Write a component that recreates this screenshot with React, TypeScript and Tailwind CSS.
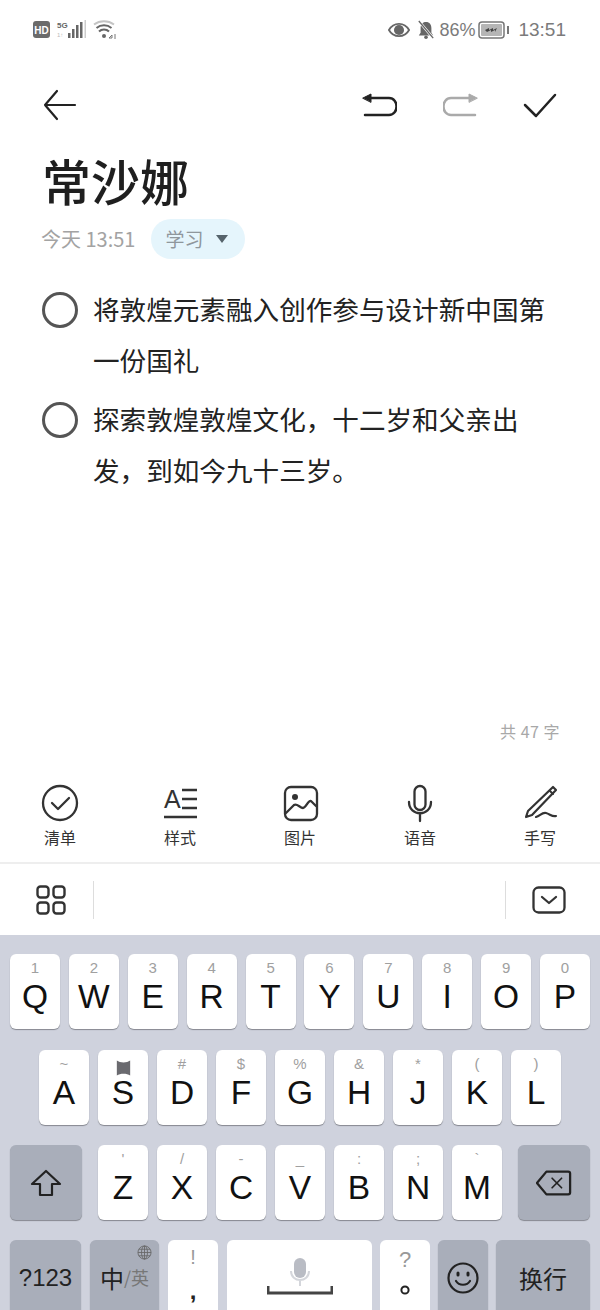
const cjk = "font-['Noto_Sans_CJK_SC','Liberation_Sans',sans-serif]";

const row1: [string, string][] = [["Q", "1"], ["W", "2"], ["E", "3"], ["R", "4"], ["T", "5"], ["Y", "6"], ["U", "7"], ["I", "8"], ["O", "9"], ["P", "0"]];
const row2: [string, string][] = [["A", "~"], ["S", ""], ["D", "#"], ["F", "$"], ["G", "%"], ["H", "&"], ["J", "*"], ["K", "("], ["L", ")"]];
const row3: [string, string][] = [["Z", "'"], ["X", "/"], ["C", "-"], ["V", "_"], ["B", ":"], ["N", ";"], ["M", "`"]];

function StatusBar() {
  return (
    <div className="h-[60px] pl-[33px] pr-[34px] flex items-center justify-between text-[#7b7b7b]">
      <svg width="84" height="24" viewBox="0 0 84 24" fill="none">
        <rect x="0" y="3" width="17" height="17" rx="3" fill="#6b6b6b" />
        <text x="8.5" y="15.5" textAnchor="middle" fontSize="10" fontWeight="700" fill="#fff" fontFamily="Liberation Sans">HD</text>
        <text x="24" y="10" fontSize="8" fontWeight="700" fill="#666" fontFamily="Liberation Sans">5G</text>
        <text x="24" y="19" fontSize="6" fill="#bbb" fontFamily="Liberation Sans">1↑</text>
        <rect x="35" y="15" width="2.5" height="5" fill="#666" />
        <rect x="39" y="11" width="2.5" height="9" fill="#666" />
        <rect x="43" y="7" width="2.5" height="13" fill="#666" />
        <rect x="47" y="4" width="2.5" height="16" fill="#666" />
        <rect x="51.5" y="2" width="1.5" height="18" fill="#ccc" />
        <path d="M61 6.5a17 17 0 0 1 20 0" stroke="#c4c4c4" strokeWidth="2" />
        <path d="M63.5 10a12 12 0 0 1 15 0" stroke="#666" strokeWidth="2" />
        <path d="M66 13.5a7 7 0 0 1 10 0" stroke="#666" strokeWidth="2" />
        <circle cx="71" cy="18" r="2" fill="#666" />
        <path d="M76 20l3-3v3zM82 16v5" stroke="#777" strokeWidth="1" />
      </svg>
      <div className="flex items-center">
        <svg width="22" height="18" viewBox="0 0 24 18" className="mr-[7px]">
          <path d="M1 9c5-9 17-9 22 0c-5 9-17 9-22 0z" fill="none" stroke="#666" strokeWidth="2" />
          <circle cx="12" cy="9" r="5.5" fill="#666" />
        </svg>
        <svg width="18" height="22" viewBox="0 0 20 22" className="mr-[4px]">
          <path d="M10 2c4 0 6 3 6 7v5l2 3H2l2-3V9c0-4 2-7 6-7z" fill="#666" />
          <circle cx="10" cy="19" r="2" fill="#666" />
          <path d="M2 1l16 19" stroke="#fff" strokeWidth="3" />
          <path d="M2 1l16 19" stroke="#666" strokeWidth="1.5" />
        </svg>
        <span className="text-[18px] font-['Liberation_Sans',sans-serif] mr-[3px]">86%</span>
        <svg width="32" height="18" viewBox="0 0 32 18" className="mr-[8px]">
          <rect x="1" y="1" width="25" height="16" rx="3" fill="#fff" stroke="#777" strokeWidth="1.5" />
          <rect x="3" y="3" width="21" height="12" rx="1" fill="#b5b5b5" />
          <path d="M7 9l4-2v2l4-2v2l4-2l-2 4v-2l-4 2v-2l-4 2z" fill="#444" />
          <rect x="29" y="5" width="2" height="8" fill="#777" />
        </svg>
        <span className="text-[19px] font-['Liberation_Sans',sans-serif]">13:51</span>
      </div>
    </div>
  );
}

function Header() {
  return (
    <div className="h-[90px] pl-[42px] pr-[42px] flex items-center justify-between text-[#222]">
      <svg width="36" height="34" viewBox="0 0 36 34" fill="none" stroke="currentColor" strokeWidth="2.2" strokeLinecap="round" strokeLinejoin="round">
        <path d="M33 17H3M15 3L3 17l12 14" />
      </svg>
      <div className="flex items-center gap-[46px]">
        <svg width="36" height="26" viewBox="0 0 36 26" fill="none" stroke="currentColor" strokeWidth="2.5" strokeLinecap="round">
          <path d="M5 6h23c10 0 10 17 0 17H4" />
          <path d="M2 6l8-4v8z" fill="currentColor" strokeWidth="1" />
        </svg>
        <svg width="36" height="26" viewBox="0 0 36 26" fill="none" stroke="#aaa" strokeWidth="2.5" strokeLinecap="round">
          <path d="M31 6H8C-2 6-2 23 8 23h24" />
          <path d="M34 6l-8-4v8z" fill="#aaa" strokeWidth="1" />
        </svg>
        <svg width="36" height="26" viewBox="0 0 36 26" fill="none" stroke="currentColor" strokeWidth="2.5" strokeLinecap="round" strokeLinejoin="round" className="-ml-[3px]">
          <path d="M3 13l11 11L33 3" />
        </svg>
      </div>
    </div>
  );
}

function TodoItem({ lines }: { lines: string[] }) {
  return (
    <div className="flex">
      <div className="w-[36px] h-[36px] mt-[9px] mr-[15px] rounded-full border-[3px] border-[#555] shrink-0" />
      <div className="text-[26.6px] leading-[51px] text-[#222]">
        {lines.map((l) => (
          <div key={l} className="whitespace-nowrap">{l}</div>
        ))}
      </div>
    </div>
  );
}

const stroke = { fill: "none", stroke: "#333", strokeWidth: 2.3, strokeLinecap: "round", strokeLinejoin: "round" } as const;

const tools = [
  {
    label: "清单",
    icon: (
      <>
        <circle cx="20" cy="20" r="17" {...stroke} />
        <path d="M12 20l6 6 11-11" {...stroke} />
      </>
    ),
  },
  {
    label: "样式",
    icon: (
      <>
        <text x="4" y="25" fontSize="25" fill="#333" fontFamily="Liberation Sans">A</text>
        <path d="M22 7h15M22 16h15M22 25h15M4 34h33" {...stroke} strokeLinecap="butt" />
      </>
    ),
  },
  {
    label: "图片",
    icon: (
      <>
        <rect x="5" y="4" width="32" height="33" rx="6" {...stroke} />
        <circle cx="15" cy="14" r="3" fill="#333" />
        <path d="M6 30l8-8c3-2 6 3 9 3 3 0 5-8 8-7l5 5" {...stroke} />
      </>
    ),
  },
  {
    label: "语音",
    icon: (
      <>
        <rect x="14.5" y="3" width="11" height="24" rx="5.5" {...stroke} />
        <path d="M9 19c0 15 22 15 22 0M20 31v7" {...stroke} />
      </>
    ),
  },
  {
    label: "手写",
    icon: (
      <>
        <path d="M33 4l3 3-24 25-6 2 2-6z" {...stroke} strokeWidth="2.2" />
        <path d="M30 8l3 3" {...stroke} strokeWidth="2" />
        <path d="M16 34c4-1 6-5 10-4s6 4 10 3" {...stroke} strokeWidth="2.2" />
      </>
    ),
  },
];

function Toolbar() {
  return (
    <div className="grid grid-cols-5 h-[91px] border-b-2 border-[#eee]">
      {tools.map((t) => (
        <div key={t.label} className="flex flex-col items-center">
          <svg width="40" height="42" viewBox="0 0 40 40" className="mt-[9px]">{t.icon}</svg>
          <span className="text-[16px] leading-[24px] mt-[1px] text-[#333]">{t.label}</span>
        </div>
      ))}
    </div>
  );
}

function KeyboardBar() {
  return (
    <div className="h-[71px] flex items-center">
      <div className="w-[94px] h-[38px] border-r border-[#ddd] flex items-center pl-[36px]">
        <svg width="30" height="30" viewBox="0 0 30 30" {...stroke} strokeWidth={2.4}>
          <rect x="1.5" y="1.5" width="11" height="11" rx="3" />
          <rect x="17.5" y="1.5" width="11" height="11" rx="3" />
          <rect x="1.5" y="17.5" width="11" height="11" rx="3" />
          <rect x="17.5" y="17.5" width="11" height="11" rx="3" />
        </svg>
      </div>
      <div className="flex-1" />
      <div className="w-[95px] h-[38px] border-l border-[#ddd] flex items-center pl-[26px]">
        <svg width="34" height="28" viewBox="0 0 34 28" {...stroke}>
          <rect x="1.5" y="1.5" width="31" height="25" rx="5" />
          <path d="M10 11l7 6 7-6" />
        </svg>
      </div>
    </div>
  );
}

function LetterKey({ letter, hint }: { letter: string; hint: string }) {
  return (
    <div className="relative w-[50px] h-[75px] rounded-[6px] bg-white shadow-[0_1px_1px_#85878f] flex flex-col items-center">
      <div className="h-[23px] pt-[4px] text-[15px] leading-[20px] text-[#a0a0a0] font-['Liberation_Sans',sans-serif]">
        {hint}
        {letter === "S" && (
          <svg width="19" height="20" viewBox="0 0 20 24" className="absolute top-[8px] left-[16px]">
            <path d="M2 3c4 3 12 3 16 0v18c-4-3-12-3-16 0z" fill="#6a6a6f" />
          </svg>
        )}
      </div>
      <span className="text-[33.5px] leading-[40px] text-[#111] font-['Liberation_Sans',sans-serif]">{letter}</span>
    </div>
  );
}

function ActionKey({ className, children }: { className: string; children: React.ReactNode }) {
  return (
    <div className={`relative h-[75px] rounded-[6px] bg-[#a9aeba] shadow-[0_1px_1px_#85878f] flex items-center justify-center text-[#222] ${className}`}>
      {children}
    </div>
  );
}

function Keyboard() {
  return (
    <div className="flex-1 bg-[#cfd2dd] pt-[19px] overflow-hidden font-['Liberation_Sans',sans-serif]">
      <div className="flex justify-center gap-[8.9px] h-[96px]">
        {row1.map(([l, h]) => <LetterKey key={l} letter={l} hint={h} />)}
      </div>
      <div className="flex justify-center gap-[9px] h-[95px]">
        {row2.map(([l, h]) => <LetterKey key={l} letter={l} hint={h} />)}
      </div>
      <div className="flex items-start pl-[10px] h-[95px]">
        <ActionKey className="w-[72px] mr-[16px]">
          <svg width="32" height="28" viewBox="0 0 32 28" fill="none" stroke="#222" strokeWidth="2.2" strokeLinejoin="round">
            <path d="M16 2L2 15h8v11h12V15h8z" />
          </svg>
        </ActionKey>
        <div className="flex gap-[9px]">
          {row3.map(([l, h]) => <LetterKey key={l} letter={l} hint={h} />)}
        </div>
        <ActionKey className="w-[72px] ml-[16px]">
          <svg width="36" height="28" viewBox="0 0 38 28" fill="none" stroke="#222" strokeWidth="2.4" strokeLinejoin="round" strokeLinecap="round">
            <path d="M11 2h23a2 2 0 0 1 2 2v20a2 2 0 0 1-2 2H11L1 14z" />
            <path d="M17 9l10 10M27 9L17 19" strokeWidth="1.8" />
          </svg>
        </ActionKey>
      </div>
      <div className="flex items-start pl-[10px] gap-[9px]">
        <ActionKey className="w-[71px] text-[24px]">?123</ActionKey>
        <ActionKey className="w-[69px]">
          <span className={`text-[24px] ${cjk}`}>中</span>
          <span className={`text-[18px] text-[#777] ${cjk}`}>/英</span>
          <svg width="15" height="15" viewBox="0 0 16 16" fill="none" stroke="#666" strokeWidth="0.9" className="absolute top-[5px] right-[7px]">
            <circle cx="8" cy="8" r="7" />
            <ellipse cx="8" cy="8" rx="3.2" ry="7" />
            <path d="M8 1v14M1 8h14M2 4.5h12M2 11.5h12" />
          </svg>
        </ActionKey>
        <div className="w-[50px] h-[75px] rounded-[6px] bg-white flex flex-col items-center">
          <span className="text-[20px] leading-[24px] mt-[5px] text-[#999]">!</span>
          <span className="text-[24px] leading-[26px] mt-[9px] font-bold text-[#222]">,</span>
        </div>
        <div className="w-[145px] h-[75px] rounded-[6px] bg-white relative flex justify-center">
          <svg width="66" height="58" viewBox="0 0 66 58" fill="none" className="mt-[17px]">
            <rect x="27" y="1" width="12" height="20" rx="6" fill="#b9bcc4" />
            <path d="M24 14c0 12 18 12 18 0M33 23v6" stroke="#d4d6db" strokeWidth="2" />
            <path d="M1 29v7h64v-7" stroke="#444" strokeWidth="3" />
          </svg>
        </div>
        <div className="w-[50px] h-[75px] rounded-[6px] bg-white flex flex-col items-center -ml-[1px]">
          <span className="text-[22px] leading-[26px] mt-[7px] text-[#999]">?</span>
          <svg width="10" height="10" viewBox="0 0 10 10" fill="none" className="mt-[12px]">
            <circle cx="5" cy="5" r="3.6" stroke="#222" strokeWidth="2" />
          </svg>
        </div>
        <ActionKey className="w-[50px] -ml-[1px]">
          <svg width="32" height="32" viewBox="0 0 32 32" fill="none" stroke="#222" strokeWidth="2.2" strokeLinecap="round">
            <circle cx="16" cy="16" r="14.5" />
            <path d="M9 19c3 5 11 5 14 0" />
            <path d="M11 11v2M21 11v2" strokeWidth="3" />
          </svg>
        </ActionKey>
        <ActionKey className={`w-[94px] -ml-[1px] text-[24px] ${cjk}`}>换行</ActionKey>
      </div>
    </div>
  );
}

export default function App() {
  return (
    <div className={`w-[600px] h-[1310px] flex flex-col overflow-hidden bg-white ${cjk}`}>
      <StatusBar />
      <Header />
      <div className="h-[623px] pl-[42px] relative">
        <h1 className="text-[49px] leading-[60px] font-medium text-[#1f1f1f]">常沙娜</h1>
        <div className="flex items-center mt-[9px] h-[40px]">
          <span className="text-[20px] text-[#a3a3a3] mr-[16px] -ml-[1px]">今天 13:51</span>
          <div className="w-[94px] h-[40px] rounded-full bg-[#e5f5fc] flex items-center pl-[14px]">
            <span className="text-[19px] text-[#8f979c]">学习</span>
            <svg width="14" height="10" viewBox="0 0 14 10" className="ml-[12px]">
              <path d="M1 1h12L7 9z" fill="#55636b" />
            </svg>
          </div>
        </div>
        <div className="mt-[24px] flex flex-col gap-[8px]">
          <TodoItem lines={["将敦煌元素融入创作参与设计新中国第", "一份国礼"]} />
          <TodoItem lines={["探索敦煌敦煌文化，十二岁和父亲出", "发，到如今九十三岁。"]} />
        </div>
        <div className="absolute right-[40px] top-[569px] text-[16px] text-[#a8a8a8] tracking-[0.5px]">共 47 字</div>
      </div>
      <Toolbar />
      <KeyboardBar />
      <Keyboard />
    </div>
  );
}
